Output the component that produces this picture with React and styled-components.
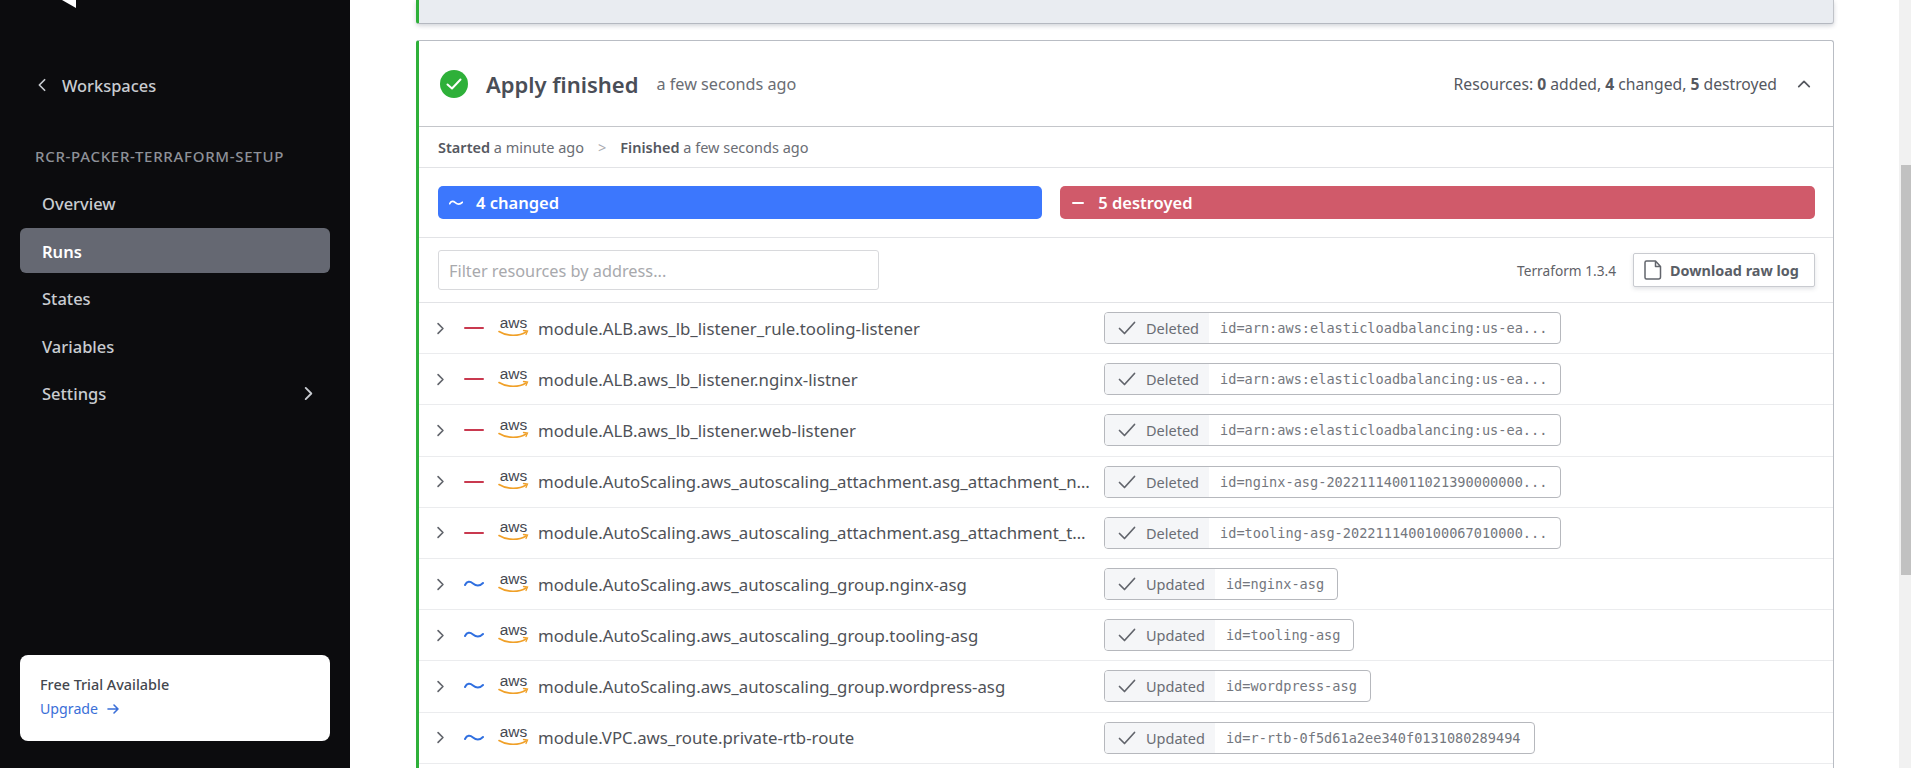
import React from 'react';
import styled, { createGlobalStyle } from 'styled-components';

const Global = createGlobalStyle`
  html, body { margin: 0; padding: 0; height: 100%; overflow: hidden; background: #fff; }
  * { box-sizing: border-box; }
  body { font-family: "Noto Sans", "Open Sans", sans-serif; }
`;

const Page = styled.div`display: flex; height: 768px; width: 1911px; overflow: hidden;`;

const Sidebar = styled.aside`
  width: 350px; flex: none; background: #0c0c0e; display: flex; flex-direction: column;
  padding: 0 20px 27px;
`;
const Logo = styled.svg`display: block; width: 14px; height: 8px; margin-left: 42px; flex: none;`;
const BackLink = styled.div`
  display: flex; align-items: center; gap: 13px; margin: 64px 0 0 15px; height: 26px;
  color: #c9ccd1; font-size: 16.4px; font-weight: 500;
`;
const SectionTitle = styled.div`
  margin: 48px 0 0 15px; height: 20px; line-height: 20px; color: #8e9198; font-size: 15px; font-weight: 500;
  letter-spacing: .7px; white-space: nowrap;
`;
const Nav = styled.nav`display: flex; flex-direction: column; gap: 2.5px; margin-top: 14px;`;
const NavItem = styled.div`
  height: 45px; border-radius: 6px; padding: 2px 14px 0 22px; display: flex; align-items: center; justify-content: space-between;
  font-size: 16.5px; font-weight: ${p => p.$active ? 600 : 500};
  color: ${p => p.$active ? '#fff' : '#c9ccd1'};
  background: ${p => p.$active ? '#656872' : 'transparent'};
`;
const Trial = styled.div`
  margin-top: auto; height: 86px; background: #fff; border-radius: 8px; padding: 20px 20px;
  display: flex; flex-direction: column; gap: 4px;
`;
const TrialTitle = styled.div`font-size: 14.4px; line-height: 20px; color: #44474e; font-weight: 500;`;
const Upgrade = styled.div`display: flex; align-items: center; gap: 9px; font-size: 14.2px; line-height: 20px; color: #3b6fd8;`;

const Main = styled.main`flex: 1; min-width: 0; padding: 0 65px 0 66px; display: flex; flex-direction: column; gap: 16px;`;
const TopCard = styled.div`
  height: 24px; flex: none; background: #e9ecf1; border-left: 3px solid #2eb039; border-right: 1px solid #c0c3c9;
  border-bottom: 1px solid #b4b8c0; border-radius: 0 0 3px 3px; box-shadow: 0 2px 4px rgba(60,70,90,.22);
`;
const Card = styled.section`
  background: #fff; border-top: 1px solid #b9bdc4; border-right: 1px solid #b9bdc4; border-left: 3px solid #2eb039;
  border-radius: 3px 3px 0 0; flex: 1; min-height: 0; overflow: hidden;
`;
const Header = styled.header`
  height: 86px; border-bottom: 1px solid #c4c6ca; display: flex; align-items: center; padding: 1px 22px 0 21px;
`;
const Title = styled.h2`margin: 0 0 0 18px; font-size: 22px; font-weight: 600; color: #4a4e57;`;
const Ago = styled.span`margin-left: 18px; font-size: 16.2px; color: #6a6d74;`;
const Summary = styled.div`margin-left: auto; font-size: 15.7px; color: #55585f; display: flex; align-items: center; gap: 20px;`;
const Timeline = styled.div`
  height: 41px; border-bottom: 1px solid #e2e3e6; display: flex; align-items: center; padding-left: 19px;
  font-size: 14.5px; color: #6a6d74;
  b { color: #55585f; font-weight: 600; }
`;
const Sep = styled.span`margin: 0 14px; color: #a8aab0;`;
const Bars = styled.div`
  height: 70px; border-bottom: 1px solid #e2e3e6; padding: 0 18px 0 19px; display: flex; align-items: center; gap: 18px;
`;
const Bar = styled.div`
  height: 33px; border-radius: 5px; flex: ${p => p.$grow}; color: #fff; background: ${p => p.$color};
  display: flex; align-items: center; padding-left: 11px; gap: 13px; font-size: 16.5px; font-weight: 600;
`;
const FilterRow = styled.div`
  height: 65px; border-bottom: 1px solid #e2e3e6; padding: 0 18px 0 19px; display: flex; align-items: center;
`;
const Filter = styled.input`
  width: 441px; height: 40px; border: 1px solid #d8d9dc; border-radius: 3px; padding: 2px 10px 0; outline: none;
  font: 16.3px "Noto Sans", sans-serif;
  &::placeholder { color: #a8a9ad; opacity: 1; }
`;
const Version = styled.span`margin-left: auto; font-size: 13.7px; color: #5f6268;`;
const DownloadButton = styled.button`
  margin-left: 17px; width: 182px; height: 34px; border: 1px solid #c9cbd0; background: #fff; border-radius: 2px;
  box-shadow: 0 2px 4px rgba(60,70,90,.15); display: flex; align-items: center; gap: 8px; padding: 0 10px;
  font: 700 14.4px "Noto Sans", sans-serif; color: #5a5e66; white-space: nowrap;
`;
const Row = styled.div`
  height: 51.2px; border-bottom: 1px solid #ebecee; display: flex; align-items: center; padding-left: 15px;
`;
const Chevron = styled.span`width: 15px; flex: none; display: flex; color: #62656c;`;
const Change = styled.span`width: 20px; margin-left: 15px; flex: none; display: flex; color: ${p => p.$color};`;
const AwsLogo = styled.svg`width: 31px; height: 22px; margin: -3px 0 0 14px; flex: none;`;
const Name = styled.div`
  width: 557px; margin-left: 9px; flex: none; font-size: 16.8px; color: #4f5258;
  white-space: nowrap; overflow: hidden; text-overflow: ellipsis;
`;
const Pill = styled.div`
  margin-left: 9px; height: 32px; display: flex; align-items: stretch; border: 1px solid #b6b8bd; border-radius: 4px; overflow: hidden; flex: none;
`;
const PillStatus = styled.div`
  background: #f5f6f8; display: flex; align-items: center; gap: 10px; padding: 0 10px 0 13px;
  font-size: 14.5px; color: #6a6d74;
`;
const PillId = styled.div`
  display: flex; align-items: center; padding: 0 13px 0 11px;
  font: 13.6px "DejaVu Sans Mono", "Liberation Mono", monospace; color: #74777e;
`;
const Track = styled.div`width: 12px; flex: none; background: #f1f1f1; padding: 165px 0 193px 2px; display: flex;`;
const Thumb = styled.div`flex: 1; background: #c1c1c1;`;

const Back = ({ dir = 'right', size = 14, w = 2 }) => {
  const d = { right: 'M5 2l6 6-6 6', left: 'M11 2l-6 6 6 6', up: 'M2 11l6-6 6 6' }[dir];
  return <svg width={size} height={size} viewBox="0 0 16 16" fill="none" stroke="currentColor" strokeWidth={w} strokeLinecap="round" strokeLinejoin="round"><path d={d} /></svg>;
};
const Minus = () => <svg width="20" height="10" viewBox="0 0 20 10"><path d="M1 5h18" stroke="currentColor" strokeWidth="2" strokeLinecap="round" /></svg>;
const Tilde = () => <svg width="20" height="10" viewBox="0 0 20 10" fill="none"><path d="M1 6C3 2 6 2 9 4.500S15 8 19 4" stroke="currentColor" strokeWidth="2" strokeLinecap="round" /></svg>;
const Check = () => <svg width="18" height="14" viewBox="0 0 18 14" fill="none"><path d="M1.500 7.500l5 5L16.500 1.500" stroke="#62656c" strokeWidth="1.700" strokeLinecap="round" strokeLinejoin="round" /></svg>;
const Aws = () => (
  <AwsLogo viewBox="0 0 31 22">
    <text x="15.500" y="12" textAnchor="middle" fontFamily="Liberation Sans, sans-serif" fontSize="15.500" fill="#454850">aws</text>
    <path d="M1 15.500c8 5 20 5 27 .5" fill="none" stroke="#f0a028" strokeWidth="1.600" strokeLinecap="round" />
    <path d="M25.500 14.500l4 .5-1.500 3.500" fill="none" stroke="#f0a028" strokeWidth="1.300" strokeLinecap="round" />
  </AwsLogo>
);

const rows = [
  ['d', 'module.ALB.aws_lb_listener_rule.tooling-listener', 'id=arn:aws:elasticloadbalancing:us-ea...'],
  ['d', 'module.ALB.aws_lb_listener.nginx-listner', 'id=arn:aws:elasticloadbalancing:us-ea...'],
  ['d', 'module.ALB.aws_lb_listener.web-listener', 'id=arn:aws:elasticloadbalancing:us-ea...'],
  ['d', 'module.AutoScaling.aws_autoscaling_attachment.asg_attachment_nginx', 'id=nginx-asg-202211140011021390000000...'],
  ['d', 'module.AutoScaling.aws_autoscaling_attachment.asg_attachment_tooling', 'id=tooling-asg-2022111400100067010000...'],
  ['u', 'module.AutoScaling.aws_autoscaling_group.nginx-asg', 'id=nginx-asg'],
  ['u', 'module.AutoScaling.aws_autoscaling_group.tooling-asg', 'id=tooling-asg'],
  ['u', 'module.AutoScaling.aws_autoscaling_group.wordpress-asg', 'id=wordpress-asg'],
  ['u', 'module.VPC.aws_route.private-rtb-route', 'id=r-rtb-0f5d61a2ee340f0131080289494'],
];

export default function App() {
  return (
    <Page>
      <Global />
      <Sidebar>
        <Logo viewBox="0 0 14 8"><path d="M0 0h14v8z" fill="#fff" /></Logo>
        <BackLink><Back dir="left" size={14} />Workspaces</BackLink>
        <SectionTitle>RCR-PACKER-TERRAFORM-SETUP</SectionTitle>
        <Nav>
          <NavItem>Overview</NavItem>
          <NavItem $active>Runs</NavItem>
          <NavItem>States</NavItem>
          <NavItem>Variables</NavItem>
          <NavItem>Settings<Back size={15} /></NavItem>
        </Nav>
        <Trial>
          <TrialTitle>Free Trial Available</TrialTitle>
          <Upgrade>Upgrade
            <svg width="13" height="12" viewBox="0 0 13 12" fill="none" stroke="currentColor" strokeWidth="1.600" strokeLinecap="round" strokeLinejoin="round"><path d="M1 6h10M7 2l4 4-4 4" /></svg>
          </Upgrade>
        </Trial>
      </Sidebar>
      <Main>
        <TopCard />
        <Card>
          <Header>
            <svg width="28" height="28" viewBox="0 0 28 28"><circle cx="14" cy="14" r="14" fill="#2eb039" /><path d="M7.500 14.500l4.500 4 8.500-9" fill="none" stroke="#fff" strokeWidth="2" strokeLinecap="round" strokeLinejoin="round" /></svg>
            <Title>Apply finished</Title>
            <Ago>a few seconds ago</Ago>
            <Summary>
              <span>Resources: <b>0</b> added, <b>4</b> changed, <b>5</b> destroyed</span>
              <Back dir="up" size={14} />
            </Summary>
          </Header>
          <Timeline>
            <span><b>Started</b> a minute ago</span>
            <Sep>&gt;</Sep>
            <span><b>Finished</b> a few seconds ago</span>
          </Timeline>
          <Bars>
            <Bar $grow="603" $color="#3c77fd"><svg width="14" height="8" viewBox="0 0 20 10" fill="none"><path d="M1 6C3 2 6 2 9 4.500S15 8 19 4" stroke="#fff" strokeWidth="2.500" strokeLinecap="round" /></svg>4 changed</Bar>
            <Bar $grow="756" $color="#d05a6a"><svg width="14" height="8" viewBox="0 0 14 8"><path d="M2 4h10" stroke="#fff" strokeWidth="2" strokeLinecap="round" /></svg>5 destroyed</Bar>
          </Bars>
          <FilterRow>
            <Filter placeholder="Filter resources by address..." />
            <Version>Terraform 1.3.4</Version>
            <DownloadButton>
              <svg width="18" height="20" viewBox="0 0 18 20" fill="none" stroke="#62656c" strokeWidth="1.500" strokeLinejoin="round"><path d="M2.500 1h9l5 5.500V17a2 2 0 0 1-2 2h-12a1.500 1.500 0 0 1-1.500-1.500V2.500A1.500 1.500 0 0 1 2.500 1zM11.500 1v5.500h5" /></svg>
              Download raw log
            </DownloadButton>
          </FilterRow>
          {rows.map(([kind, name, id]) => (
            <Row key={name}>
              <Chevron><Back size={13} /></Chevron>
              <Change $color={kind === 'd' ? '#c9394f' : '#2f6fe0'}>{kind === 'd' ? <Minus /> : <Tilde />}</Change>
              <Aws />
              <Name>{name}</Name>
              <Pill>
                <PillStatus><Check />{kind === 'd' ? 'Deleted' : 'Updated'}</PillStatus>
                <PillId>{id}</PillId>
              </Pill>
            </Row>
          ))}
        </Card>
      </Main>
      <Track><Thumb /></Track>
    </Page>
  );
}
